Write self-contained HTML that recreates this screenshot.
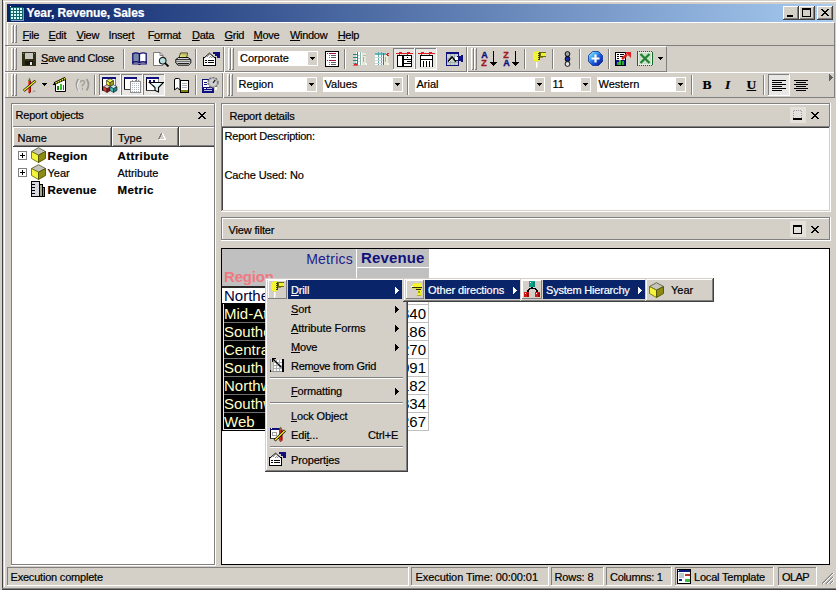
<!DOCTYPE html>
<html><head><meta charset="utf-8"><title>Year, Revenue, Sales</title>
<style>
html,body{margin:0;padding:0}
body{width:836px;height:590px;background:#d4d0c8;position:relative;overflow:hidden;font-family:"Liberation Sans",sans-serif;font-size:11px;color:#000}
#w{position:absolute;left:0;top:0;width:836px;height:590px;overflow:hidden}
#w div,#w svg{position:absolute}
.t{white-space:nowrap;line-height:13px;font-size:11px;-webkit-text-stroke:0.2px}
.b{font-weight:bold}
.g{white-space:nowrap;font-size:14px;line-height:16px}
u{text-decoration:underline}
</style></head><body><div id="w">
<div style="left:2px;top:0px;width:1px;height:590px;background:#404040;"></div>
<div style="left:3px;top:1px;width:833px;height:1px;background:#ffffff;"></div>
<div style="left:4px;top:1px;width:1px;height:586px;background:#ffffff;"></div>
<div style="left:2px;top:588px;width:834px;height:1px;background:#808080;"></div>
<div style="left:2px;top:589px;width:834px;height:1px;background:#404040;"></div>
<div style="left:7px;top:4px;width:827px;height:18px;background:linear-gradient(to right,#0a246a 0%,#a6caf0 100%);"></div>
<div class="t b" style="left:26.5px;top:6px;color:#fff;font-size:12px;line-height:14px;letter-spacing:-0.08px">Year, Revenue, Sales</div>
<div style="left:783px;top:6px;width:16px;height:14px;background:#d4d0c8;"></div>
<div style="left:783px;top:6px;width:15px;height:1px;background:#ffffff;"></div>
<div style="left:783px;top:6px;width:1px;height:13px;background:#ffffff;"></div>
<div style="left:783px;top:19px;width:16px;height:1px;background:#404040;"></div>
<div style="left:798px;top:6px;width:1px;height:14px;background:#404040;"></div>
<div style="left:784px;top:18px;width:14px;height:1px;background:#808080;"></div>
<div style="left:797px;top:7px;width:1px;height:12px;background:#808080;"></div>
<div style="left:799px;top:6px;width:16px;height:14px;background:#d4d0c8;"></div>
<div style="left:799px;top:6px;width:15px;height:1px;background:#ffffff;"></div>
<div style="left:799px;top:6px;width:1px;height:13px;background:#ffffff;"></div>
<div style="left:799px;top:19px;width:16px;height:1px;background:#404040;"></div>
<div style="left:814px;top:6px;width:1px;height:14px;background:#404040;"></div>
<div style="left:800px;top:18px;width:14px;height:1px;background:#808080;"></div>
<div style="left:813px;top:7px;width:1px;height:12px;background:#808080;"></div>
<div style="left:817px;top:6px;width:16px;height:14px;background:#d4d0c8;"></div>
<div style="left:817px;top:6px;width:15px;height:1px;background:#ffffff;"></div>
<div style="left:817px;top:6px;width:1px;height:13px;background:#ffffff;"></div>
<div style="left:817px;top:19px;width:16px;height:1px;background:#404040;"></div>
<div style="left:832px;top:6px;width:1px;height:14px;background:#404040;"></div>
<div style="left:818px;top:18px;width:14px;height:1px;background:#808080;"></div>
<div style="left:831px;top:7px;width:1px;height:12px;background:#808080;"></div>
<div style="left:787px;top:15px;width:6px;height:2px;background:#000;"></div>
<div style="left:802px;top:8px;width:9px;height:9px;background:#000;"></div>
<div style="left:803px;top:10px;width:7px;height:6px;background:#d4d0c8;"></div>
<svg style="left:821px;top:9px" width="8" height="7" viewBox="0 0 8 7" shape-rendering="crispEdges"><path d="M0 0h2v1h1v1h2v-1h1v-1h2v1h-1v1h-1v1h-1v1h1v1h1v1h1v1h-2v-1h-1v-1h-2v1h-1v1h-2v-1h1v-1h1v-1h1v-1h-1v-1h-1v-1h-1z" fill="#000"/></svg>
<div style="left:7px;top:22px;width:827px;height:1px;background:#ffffff;"></div>
<div style="left:7px;top:22px;width:1px;height:76px;background:#ffffff;"></div>
<div style="left:5px;top:45px;width:830px;height:1px;background:#808080;"></div>
<div style="left:7px;top:46px;width:659px;height:1px;background:#ffffff;"></div>
<div style="left:5px;top:71px;width:662px;height:1px;background:#808080;"></div>
<div style="left:666px;top:47px;width:1px;height:25px;background:#808080;"></div>
<div style="left:5px;top:72px;width:830px;height:1px;background:#ffffff;"></div>
<div style="left:5px;top:97px;width:830px;height:1px;background:#808080;"></div>
<div style="left:834px;top:23px;width:1px;height:75px;background:#808080;"></div>
<div style="left:11px;top:25px;width:1px;height:18px;background:#ffffff;"></div>
<div style="left:11px;top:25px;width:2px;height:1px;background:#ffffff;"></div>
<div style="left:13px;top:25px;width:1px;height:18px;background:#808080;"></div>
<div style="left:12px;top:42px;width:2px;height:1px;background:#808080;"></div>
<div style="left:14px;top:25px;width:1px;height:18px;background:#ffffff;"></div>
<div style="left:14px;top:25px;width:2px;height:1px;background:#ffffff;"></div>
<div style="left:16px;top:25px;width:1px;height:18px;background:#808080;"></div>
<div style="left:15px;top:42px;width:2px;height:1px;background:#808080;"></div>
<div style="left:11px;top:48px;width:1px;height:22px;background:#ffffff;"></div>
<div style="left:11px;top:48px;width:2px;height:1px;background:#ffffff;"></div>
<div style="left:13px;top:48px;width:1px;height:22px;background:#808080;"></div>
<div style="left:12px;top:69px;width:2px;height:1px;background:#808080;"></div>
<div style="left:14px;top:48px;width:1px;height:22px;background:#ffffff;"></div>
<div style="left:14px;top:48px;width:2px;height:1px;background:#ffffff;"></div>
<div style="left:16px;top:48px;width:1px;height:22px;background:#808080;"></div>
<div style="left:15px;top:69px;width:2px;height:1px;background:#808080;"></div>
<div style="left:11px;top:74px;width:1px;height:22px;background:#ffffff;"></div>
<div style="left:11px;top:74px;width:2px;height:1px;background:#ffffff;"></div>
<div style="left:13px;top:74px;width:1px;height:22px;background:#808080;"></div>
<div style="left:12px;top:95px;width:2px;height:1px;background:#808080;"></div>
<div style="left:14px;top:74px;width:1px;height:22px;background:#ffffff;"></div>
<div style="left:14px;top:74px;width:2px;height:1px;background:#ffffff;"></div>
<div style="left:16px;top:74px;width:1px;height:22px;background:#808080;"></div>
<div style="left:15px;top:95px;width:2px;height:1px;background:#808080;"></div>
<div style="left:223px;top:47px;width:1px;height:25px;background:#808080;"></div>
<div style="left:224px;top:47px;width:1px;height:25px;background:#ffffff;"></div>
<div style="left:466px;top:47px;width:1px;height:25px;background:#808080;"></div>
<div style="left:467px;top:47px;width:1px;height:25px;background:#ffffff;"></div>
<div style="left:222px;top:73px;width:1px;height:25px;background:#808080;"></div>
<div style="left:223px;top:73px;width:1px;height:25px;background:#ffffff;"></div>
<div style="left:228px;top:48px;width:1px;height:22px;background:#ffffff;"></div>
<div style="left:228px;top:48px;width:2px;height:1px;background:#ffffff;"></div>
<div style="left:230px;top:48px;width:1px;height:22px;background:#808080;"></div>
<div style="left:229px;top:69px;width:2px;height:1px;background:#808080;"></div>
<div style="left:231px;top:48px;width:1px;height:22px;background:#ffffff;"></div>
<div style="left:231px;top:48px;width:2px;height:1px;background:#ffffff;"></div>
<div style="left:233px;top:48px;width:1px;height:22px;background:#808080;"></div>
<div style="left:232px;top:69px;width:2px;height:1px;background:#808080;"></div>
<div style="left:471px;top:48px;width:1px;height:22px;background:#ffffff;"></div>
<div style="left:471px;top:48px;width:2px;height:1px;background:#ffffff;"></div>
<div style="left:473px;top:48px;width:1px;height:22px;background:#808080;"></div>
<div style="left:472px;top:69px;width:2px;height:1px;background:#808080;"></div>
<div style="left:474px;top:48px;width:1px;height:22px;background:#ffffff;"></div>
<div style="left:474px;top:48px;width:2px;height:1px;background:#ffffff;"></div>
<div style="left:476px;top:48px;width:1px;height:22px;background:#808080;"></div>
<div style="left:475px;top:69px;width:2px;height:1px;background:#808080;"></div>
<div style="left:227px;top:74px;width:1px;height:22px;background:#ffffff;"></div>
<div style="left:227px;top:74px;width:2px;height:1px;background:#ffffff;"></div>
<div style="left:229px;top:74px;width:1px;height:22px;background:#808080;"></div>
<div style="left:228px;top:95px;width:2px;height:1px;background:#808080;"></div>
<div style="left:230px;top:74px;width:1px;height:22px;background:#ffffff;"></div>
<div style="left:230px;top:74px;width:2px;height:1px;background:#ffffff;"></div>
<div style="left:232px;top:74px;width:1px;height:22px;background:#808080;"></div>
<div style="left:231px;top:95px;width:2px;height:1px;background:#808080;"></div>
<div class="t" style="left:22.6px;top:29px;letter-spacing:-0.3px"><u>F</u>ile</div>
<div class="t" style="left:48.5px;top:29px;letter-spacing:-0.3px"><u>E</u>dit</div>
<div class="t" style="left:76.6px;top:29px;letter-spacing:-0.3px"><u>V</u>iew</div>
<div class="t" style="left:108.5px;top:29px;letter-spacing:-0.3px">Inse<u>r</u>t</div>
<div class="t" style="left:147.7px;top:29px;letter-spacing:-0.3px">F<u>o</u>rmat</div>
<div class="t" style="left:192px;top:29px;letter-spacing:-0.3px"><u>D</u>ata</div>
<div class="t" style="left:224.6px;top:29px;letter-spacing:-0.3px"><u>G</u>rid</div>
<div class="t" style="left:253.5px;top:29px;letter-spacing:-0.3px"><u>M</u>ove</div>
<div class="t" style="left:290px;top:29px;letter-spacing:-0.3px"><u>W</u>indow</div>
<div class="t" style="left:337.7px;top:29px;letter-spacing:-0.3px"><u>H</u>elp</div>
<div style="left:123px;top:49px;width:1px;height:20px;background:#808080;"></div>
<div style="left:124px;top:49px;width:1px;height:20px;background:#ffffff;"></div>
<div style="left:195px;top:49px;width:1px;height:20px;background:#808080;"></div>
<div style="left:196px;top:49px;width:1px;height:20px;background:#ffffff;"></div>
<div style="left:344px;top:49px;width:1px;height:20px;background:#808080;"></div>
<div style="left:345px;top:49px;width:1px;height:20px;background:#ffffff;"></div>
<div style="left:524px;top:49px;width:1px;height:20px;background:#808080;"></div>
<div style="left:525px;top:49px;width:1px;height:20px;background:#ffffff;"></div>
<div style="left:552px;top:49px;width:1px;height:20px;background:#808080;"></div>
<div style="left:553px;top:49px;width:1px;height:20px;background:#ffffff;"></div>
<div style="left:579px;top:49px;width:1px;height:20px;background:#808080;"></div>
<div style="left:580px;top:49px;width:1px;height:20px;background:#ffffff;"></div>
<div style="left:608px;top:49px;width:1px;height:20px;background:#808080;"></div>
<div style="left:609px;top:49px;width:1px;height:20px;background:#ffffff;"></div>
<div style="left:94px;top:75px;width:1px;height:20px;background:#808080;"></div>
<div style="left:95px;top:75px;width:1px;height:20px;background:#ffffff;"></div>
<div style="left:407px;top:75px;width:1px;height:20px;background:#808080;"></div>
<div style="left:408px;top:75px;width:1px;height:20px;background:#ffffff;"></div>
<div style="left:691px;top:75px;width:1px;height:20px;background:#808080;"></div>
<div style="left:692px;top:75px;width:1px;height:20px;background:#ffffff;"></div>
<div style="left:763px;top:75px;width:1px;height:20px;background:#808080;"></div>
<div style="left:764px;top:75px;width:1px;height:20px;background:#ffffff;"></div>
<div style="left:238px;top:51px;width:80px;height:15px;background:#fff;"></div>
<div class="t" style="left:240px;top:52px;">Corporate</div>
<div style="left:308px;top:52px;width:9px;height:13px;background:#d4d0c8;"></div>
<svg style="left:310px;top:57px" width="5" height="3" viewBox="0 0 5 3" shape-rendering="crispEdges"><path d="M0 0h5v1h-1v1h-1v1h-1v-1h-1v-1h-1z" fill="#000"/></svg>
<div style="left:237px;top:77px;width:80px;height:15px;background:#fff;"></div>
<div class="t" style="left:238.5px;top:78px;">Region</div>
<div style="left:307px;top:78px;width:9px;height:13px;background:#d4d0c8;"></div>
<svg style="left:309px;top:83px" width="5" height="3" viewBox="0 0 5 3" shape-rendering="crispEdges"><path d="M0 0h5v1h-1v1h-1v1h-1v-1h-1v-1h-1z" fill="#000"/></svg>
<div style="left:323px;top:77px;width:80px;height:15px;background:#fff;"></div>
<div class="t" style="left:324.5px;top:78px;">Values</div>
<div style="left:393px;top:78px;width:9px;height:13px;background:#d4d0c8;"></div>
<svg style="left:395px;top:83px" width="5" height="3" viewBox="0 0 5 3" shape-rendering="crispEdges"><path d="M0 0h5v1h-1v1h-1v1h-1v-1h-1v-1h-1z" fill="#000"/></svg>
<div style="left:415px;top:77px;width:130px;height:15px;background:#fff;"></div>
<div class="t" style="left:416.5px;top:78px;">Arial</div>
<div style="left:535px;top:78px;width:9px;height:13px;background:#d4d0c8;"></div>
<svg style="left:537px;top:83px" width="5" height="3" viewBox="0 0 5 3" shape-rendering="crispEdges"><path d="M0 0h5v1h-1v1h-1v1h-1v-1h-1v-1h-1z" fill="#000"/></svg>
<div style="left:551px;top:77px;width:40px;height:15px;background:#fff;"></div>
<div class="t" style="left:552.5px;top:78px;">11</div>
<div style="left:581px;top:78px;width:9px;height:13px;background:#d4d0c8;"></div>
<svg style="left:583px;top:83px" width="5" height="3" viewBox="0 0 5 3" shape-rendering="crispEdges"><path d="M0 0h5v1h-1v1h-1v1h-1v-1h-1v-1h-1z" fill="#000"/></svg>
<div style="left:597px;top:77px;width:89px;height:15px;background:#fff;"></div>
<div class="t" style="left:598.5px;top:78px;">Western</div>
<div style="left:676px;top:78px;width:9px;height:13px;background:#d4d0c8;"></div>
<svg style="left:678px;top:83px" width="5" height="3" viewBox="0 0 5 3" shape-rendering="crispEdges"><path d="M0 0h5v1h-1v1h-1v1h-1v-1h-1v-1h-1z" fill="#000"/></svg>
<div class="t" style="left:41px;top:52px;letter-spacing:-0.33px"><u>S</u>ave and Close</div>
<svg style="left:9px;top:5px" width="16" height="16" viewBox="0 0 16 16" shape-rendering="crispEdges"><rect x="0" y="0" width="16" height="16" fill="#0a246a"/><rect x="1" y="2" width="13" height="13" fill="#126868"/><rect x="2" y="3" width="2" height="2" fill="#d8ffff"/><rect x="2" y="6" width="2" height="2" fill="#d8ffff"/><rect x="2" y="9" width="2" height="2" fill="#d8ffff"/><rect x="2" y="12" width="2" height="2" fill="#d8ffff"/><rect x="5" y="3" width="2" height="2" fill="#d8ffff"/><rect x="5" y="6" width="2" height="2" fill="#d8ffff"/><rect x="5" y="9" width="2" height="2" fill="#d8ffff"/><rect x="5" y="12" width="2" height="2" fill="#d8ffff"/><rect x="8" y="3" width="2" height="2" fill="#d8ffff"/><rect x="8" y="6" width="2" height="2" fill="#d8ffff"/><rect x="8" y="9" width="2" height="2" fill="#d8ffff"/><rect x="8" y="12" width="2" height="2" fill="#d8ffff"/><rect x="11" y="3" width="2" height="2" fill="#d8ffff"/><rect x="11" y="6" width="2" height="2" fill="#d8ffff"/><rect x="11" y="9" width="2" height="2" fill="#d8ffff"/><rect x="11" y="12" width="2" height="2" fill="#d8ffff"/><rect x="2" y="15" width="13" height="1" fill="#8098c8"/><rect x="14" y="3" width="1" height="13" fill="#8098c8"/><rect x="1" y="1" width="1" height="1" fill="#fff"/></svg>
<svg style="left:22px;top:52px" width="14" height="14" viewBox="0 0 14 14" shape-rendering="crispEdges"><rect x="0" y="0" width="14" height="14" fill="#303018"/><rect x="3" y="1" width="8" height="6" fill="#c8c8c0"/><rect x="1" y="1" width="1" height="1" fill="#808060"/><rect x="12" y="1" width="1" height="1" fill="#808060"/><rect x="3" y="9" width="8" height="4" fill="#181808"/><rect x="8" y="10" width="2" height="3" fill="#e8e8e8"/></svg>
<svg style="left:132px;top:52px" width="15" height="13" viewBox="0 0 15 13" shape-rendering="crispEdges"><g shape-rendering="geometricPrecision"><path d="M0.8 1.5 Q4 0 7.5 1.8 L7.5 10.5 Q4 9 0.8 10.5 Z" fill="#7888a8" stroke="#101070" stroke-width="1.3" /><path d="M14.2 1.5 Q11 0 7.5 1.8 L7.5 10.5 Q11 9 14.2 10.5 Z" fill="#fff" stroke="#101070" stroke-width="1.3" /><path d="M0.8 10.5 L0.8 12 L6.5 12 L7.5 12.8 L8.5 12 L14.2 12 L14.2 10.5" fill="none" stroke="#101070" stroke-width="1.2" /></g></svg>
<svg style="left:153px;top:52px" width="17" height="15" viewBox="0 0 17 15" shape-rendering="crispEdges"><g shape-rendering="geometricPrecision"><path d="M0.5 0.5 H7 L10 3.5 V13.5 H0.5 Z" fill="#fff" stroke="#606060" stroke-width="0.8" /><path d="M7 0.5 V3.5 H10" fill="none" stroke="#606060" stroke-width="0.8" /><circle cx="9.7" cy="8.7" r="3.3" fill="#b8e0e0" stroke="#202020" stroke-width="1.1"/><path d="M12 11.2 L15.5 14.5" fill="none" stroke="#000" stroke-width="1.8" /></g></svg>
<svg style="left:175px;top:52px" width="17" height="14" viewBox="0 0 17 14" shape-rendering="crispEdges"><g shape-rendering="geometricPrecision"><path d="M4 6 L5.5 1 H12.5 L11.5 6 Z" fill="#f4f490" stroke="#303010" stroke-width="0.9" /><path d="M6.5 2.6 H11.3 M6.2 4 H11" fill="none" stroke="#a0a040" stroke-width="0.7" /><path d="M0.8 7.5 L3.5 5.5 H13 L15.8 7.5 V11 L13.5 13.2 H3 L0.8 11 Z" fill="#d0d0d0" stroke="#101010" stroke-width="1" /><path d="M0.8 7.5 H15.8" fill="none" stroke="#101010" stroke-width="0.8" /><path d="M1.2 9.4 H15.4" fill="none" stroke="#707070" stroke-width="1" /><path d="M2.5 11.5 H14" fill="none" stroke="#202020" stroke-width="1" /></g></svg>
<svg style="left:203px;top:52px" width="17" height="14" viewBox="0 0 17 14" shape-rendering="crispEdges"><rect x="0" y="5" width="13" height="9" fill="#000"/><rect x="1" y="6" width="11" height="7" fill="#fff"/><rect x="2" y="8" width="2" height="1" fill="#000"/><rect x="5" y="8" width="6" height="1" fill="#000"/><rect x="2" y="10" width="2" height="1" fill="#000"/><rect x="5" y="10" width="6" height="1" fill="#000"/><g shape-rendering="geometricPrecision"><path d="M1 6 L6.5 1.2 L12 6" fill="#fff" stroke="#000" stroke-width="1" /><path d="M4 5 L7 2.2 M6 6 L9 3.2 M8 6 L10 4.2" fill="none" stroke="#707070" stroke-width="0.8" /></g><rect x="10" y="0" width="7" height="2" fill="#10107c"/><rect x="14" y="0" width="3" height="6" fill="#10107c"/><rect x="12" y="2" width="2" height="2" fill="#10107c"/></svg>
<svg style="left:325px;top:51px" width="14" height="16" viewBox="0 0 14 16" shape-rendering="crispEdges"><rect x="0" y="0" width="14" height="16" fill="#000"/><rect x="1" y="1" width="12" height="14" fill="#fff"/><rect x="4" y="2" width="7" height="1" fill="#a01040"/><rect x="2" y="2" width="1" height="1" fill="#a01040"/><rect x="4" y="4" width="1" height="1" fill="#808080"/><rect x="6" y="4" width="5" height="1" fill="#606060"/><rect x="4" y="6" width="1" height="1" fill="#808080"/><rect x="6" y="6" width="5" height="1" fill="#606060"/><rect x="4" y="9" width="7" height="1" fill="#a01040"/><rect x="2" y="9" width="1" height="1" fill="#a01040"/><rect x="4" y="11" width="1" height="1" fill="#808080"/><rect x="6" y="11" width="5" height="1" fill="#606060"/><rect x="4" y="13" width="1" height="1" fill="#808080"/><rect x="6" y="13" width="5" height="1" fill="#606060"/></svg>
<svg style="left:353px;top:52px" width="14" height="14" viewBox="0 0 14 14" shape-rendering="crispEdges"><rect x="3" y="0" width="6" height="13" fill="#fff"/><rect x="0" y="2" width="5" height="1" fill="#208888"/><rect x="0" y="5" width="5" height="1" fill="#208888"/><rect x="0" y="8" width="5" height="1" fill="#208888"/><rect x="0" y="11" width="5" height="1" fill="#60a8a8"/><rect x="4" y="0" width="1" height="13" fill="#208888"/><rect x="7" y="0" width="1" height="13" fill="#88b8b0"/><rect x="5" y="3" width="2" height="1" fill="#d0d8d0"/><rect x="5" y="6" width="2" height="1" fill="#d0d8d0"/><rect x="5" y="9" width="2" height="1" fill="#d0d8d0"/><rect x="9" y="1" width="4" height="12" fill="#e4e8d8"/><rect x="10" y="3" width="3" height="1" fill="#b0c0a0"/><rect x="10" y="5" width="1" height="5" fill="#98b890"/><rect x="12" y="11" width="2" height="2" fill="#f4f4f0"/><rect x="1" y="12" width="3" height="1" fill="#e02020"/><rect x="2" y="11" width="1" height="1" fill="#e02020"/><rect x="0" y="13" width="5" height="1" fill="#e06060"/></svg>
<svg style="left:375px;top:52px" width="15" height="14" viewBox="0 0 15 14" shape-rendering="crispEdges"><rect x="0" y="1" width="11" height="2" fill="#58b8c0"/><rect x="0" y="3" width="11" height="10" fill="#fff"/><rect x="3" y="0" width="1" height="13" fill="#58a8a8"/><rect x="6" y="0" width="1" height="13" fill="#58a8a8"/><rect x="0" y="5" width="11" height="1" fill="#c8d8d8"/><rect x="0" y="8" width="11" height="1" fill="#c8d8d8"/><rect x="0" y="11" width="11" height="1" fill="#c8d8d8"/><rect x="8" y="1" width="1" height="12" fill="#308080"/><rect x="9" y="3" width="4" height="10" fill="#e8ecd8"/><rect x="10" y="5" width="1" height="5" fill="#98b890"/><rect x="12" y="11" width="2" height="2" fill="#f4f4f0"/><rect x="12" y="1" width="2" height="1" fill="#e02020"/><rect x="11" y="2" width="2" height="1" fill="#e02020"/><rect x="12" y="3" width="2" height="1" fill="#e02020"/></svg>
<div style="left:393px;top:48px;width:22px;height:22px;background:#e9e7e3;"></div>
<div style="left:393px;top:48px;width:21px;height:1px;background:#808080;"></div>
<div style="left:393px;top:48px;width:1px;height:21px;background:#808080;"></div>
<div style="left:393px;top:69px;width:22px;height:1px;background:#ffffff;"></div>
<div style="left:414px;top:48px;width:1px;height:22px;background:#ffffff;"></div>
<div style="left:415px;top:48px;width:22px;height:22px;background:#e9e7e3;"></div>
<div style="left:415px;top:48px;width:21px;height:1px;background:#808080;"></div>
<div style="left:415px;top:48px;width:1px;height:21px;background:#808080;"></div>
<div style="left:415px;top:69px;width:22px;height:1px;background:#ffffff;"></div>
<div style="left:436px;top:48px;width:1px;height:22px;background:#ffffff;"></div>
<svg style="left:396px;top:52px" width="17" height="15" viewBox="0 0 17 15" shape-rendering="crispEdges"><rect x="0" y="1" width="17" height="1" fill="#e02020"/><rect x="3" y="0" width="1" height="3" fill="#e02020"/><rect x="4" y="0" width="2" height="1" fill="#e02020"/><rect x="11" y="0" width="1" height="3" fill="#e02020"/><rect x="12" y="0" width="2" height="1" fill="#e02020"/><rect x="1" y="3" width="15" height="12" fill="#000"/><rect x="2" y="4" width="4" height="10" fill="#fff"/><rect x="8" y="4" width="7" height="1" fill="#fff"/><rect x="8" y="6" width="7" height="1" fill="#fff"/><rect x="8" y="8" width="7" height="1" fill="#fff"/><rect x="8" y="10" width="7" height="1" fill="#fff"/><rect x="8" y="12" width="7" height="2" fill="#fff"/><rect x="8" y="4" width="3" height="3" fill="#fff"/><rect x="8" y="8" width="3" height="2" fill="#fff"/><rect x="12" y="5" width="3" height="1" fill="#fff"/></svg>
<svg style="left:418px;top:52px" width="17" height="15" viewBox="0 0 17 15" shape-rendering="crispEdges"><rect x="0" y="1" width="17" height="1" fill="#e02020"/><rect x="3" y="0" width="1" height="3" fill="#e02020"/><rect x="4" y="0" width="2" height="1" fill="#e02020"/><rect x="11" y="0" width="1" height="3" fill="#e02020"/><rect x="12" y="0" width="2" height="1" fill="#e02020"/><rect x="2" y="3" width="13" height="12" fill="#000"/><rect x="3" y="4" width="11" height="3" fill="#fff"/><rect x="3" y="8" width="11" height="1" fill="#fff"/><rect x="3" y="9" width="2" height="5" fill="#fff"/><rect x="6" y="9" width="2" height="5" fill="#fff"/><rect x="9" y="9" width="2" height="5" fill="#fff"/><rect x="12" y="9" width="2" height="5" fill="#fff"/><rect x="2" y="14" width="13" height="1" fill="#e9e7e3"/><rect x="2" y="13" width="1" height="2" fill="#000"/><rect x="5" y="13" width="1" height="2" fill="#000"/><rect x="8" y="13" width="1" height="2" fill="#000"/><rect x="11" y="13" width="1" height="2" fill="#000"/><rect x="14" y="13" width="1" height="2" fill="#000"/></svg>
<svg style="left:446px;top:52px" width="17" height="14" viewBox="0 0 17 14" shape-rendering="crispEdges"><rect x="0" y="0" width="13" height="14" fill="#10107c"/><rect x="1" y="2" width="11" height="11" fill="#c8d0d0"/><rect x="1" y="0" width="11" height="2" fill="#10107c"/><rect x="4" y="2" width="1" height="11" fill="#a0b0b0"/><rect x="8" y="2" width="1" height="11" fill="#a0b0b0"/><rect x="1" y="6" width="11" height="1" fill="#a0b0b0"/><rect x="1" y="10" width="11" height="1" fill="#a0b0b0"/><g shape-rendering="geometricPrecision"><path d="M2 9.5 L6 5 L9.5 9 L11 7" fill="none" stroke="#000" stroke-width="1.6" /><path d="M3 10 L6.5 6.5" fill="none" stroke="#fff" stroke-width="0.8" /></g><rect x="11" y="4" width="6" height="5" fill="#10107c"/><rect x="9" y="5" width="3" height="3" fill="#fff"/><rect x="15" y="3" width="2" height="7" fill="#10107c"/></svg>
<svg style="left:481px;top:51px" width="17" height="16" viewBox="0 0 17 16" shape-rendering="crispEdges"><text x="0.3" y="6.9" font-family="Liberation Sans, sans-serif" font-weight="bold" font-size="9" fill="#10107c" stroke="#10107c" stroke-width="0.35" shape-rendering="geometricPrecision">A</text><text x="0.3" y="14.7" font-family="Liberation Sans, sans-serif" font-weight="bold" font-size="9" fill="#a01818" stroke="#a01818" stroke-width="0.35" shape-rendering="geometricPrecision">Z</text><rect x="12" y="0" width="1" height="14" fill="#000"/><rect x="9" y="11" width="7" height="1" fill="#000"/><rect x="10" y="12" width="5" height="1" fill="#000"/><rect x="11" y="13" width="3" height="1" fill="#000"/><rect x="12" y="14" width="1" height="1" fill="#000"/></svg>
<svg style="left:503px;top:51px" width="17" height="16" viewBox="0 0 17 16" shape-rendering="crispEdges"><text x="0.3" y="6.9" font-family="Liberation Sans, sans-serif" font-weight="bold" font-size="9" fill="#a01818" stroke="#a01818" stroke-width="0.35" shape-rendering="geometricPrecision">Z</text><text x="0.3" y="14.7" font-family="Liberation Sans, sans-serif" font-weight="bold" font-size="9" fill="#10107c" stroke="#10107c" stroke-width="0.35" shape-rendering="geometricPrecision">A</text><rect x="12" y="0" width="1" height="14" fill="#000"/><rect x="9" y="11" width="7" height="1" fill="#000"/><rect x="10" y="12" width="5" height="1" fill="#000"/><rect x="11" y="13" width="3" height="1" fill="#000"/><rect x="12" y="14" width="1" height="1" fill="#000"/></svg>
<svg style="left:533px;top:51px" width="13" height="17" viewBox="0 0 13 17" shape-rendering="crispEdges"><rect x="3" y="9" width="1" height="8" fill="#fff"/><rect x="4" y="10" width="1" height="6" fill="#e8e8e0"/><rect x="1" y="1" width="5" height="9" fill="#f4f430"/><rect x="0" y="2" width="1" height="6" fill="#f4f430"/><rect x="2" y="0" width="4" height="1" fill="#e8e840"/><rect x="2" y="10" width="3" height="1" fill="#e0e040"/><rect x="6" y="1" width="1" height="8" fill="#404010"/><rect x="5" y="2" width="1" height="1" fill="#404010"/><rect x="5" y="4" width="1" height="1" fill="#404010"/><rect x="5" y="6" width="1" height="1" fill="#404010"/><rect x="5" y="8" width="1" height="1" fill="#404010"/><rect x="7" y="1" width="6" height="5" fill="#686810"/><rect x="8" y="2" width="5" height="3" fill="#f0f030"/><rect x="7" y="6" width="3" height="1" fill="#909020"/></svg>
<svg style="left:563px;top:51px" width="9" height="16" viewBox="0 0 9 16" shape-rendering="crispEdges"><g shape-rendering="geometricPrecision"><rect x="2.6" y="2" width="3.8" height="12" fill="#303030"/><circle cx="4.5" cy="3" r="2.4" fill="#9aa4a4" stroke="#000" stroke-width="0.9"/><circle cx="4.5" cy="8" r="2.4" fill="#1828a8" stroke="#000" stroke-width="0.9"/><circle cx="4.5" cy="13" r="2.4" fill="#e4e4e4" stroke="#000" stroke-width="0.9"/></g></svg>
<svg style="left:588px;top:51px" width="15" height="15" viewBox="0 0 15 15" shape-rendering="crispEdges"><defs><linearGradient id="gg" x1="0" y1="0" x2="1" y2="1"><stop offset="0" stop-color="#b0f0ff"/><stop offset="0.3" stop-color="#48b0f0"/><stop offset="0.6" stop-color="#1850d8"/><stop offset="1" stop-color="#081078"/></linearGradient></defs><g shape-rendering="geometricPrecision"><path d="M4.5 0.5 H10.5 L14.5 4.5 V10.5 L10.5 14.5 H4.5 L0.5 10.5 V4.5 Z" fill="url(#gg)" stroke="#1030a0" stroke-width="0.8" /><path d="M7.5 3.5 V11.5 M3.5 7.5 H11.5" fill="none" stroke="#fff" stroke-width="2.2" /></g></svg>
<svg style="left:615px;top:52px" width="17" height="14" viewBox="0 0 17 14" shape-rendering="crispEdges"><rect x="0" y="0" width="11" height="14" fill="#000"/><rect x="1" y="1" width="9" height="12" fill="#fff"/><rect x="2" y="2" width="2" height="1" fill="#000"/><rect x="5" y="2" width="4" height="1" fill="#000"/><rect x="2" y="4" width="2" height="1" fill="#000"/><rect x="5" y="4" width="3" height="1" fill="#000"/><rect x="2" y="6" width="2" height="1" fill="#000"/><rect x="1" y="8" width="9" height="5" fill="#10107c"/><rect x="2" y="10" width="2" height="3" fill="#30a030"/><rect x="4" y="8" width="2" height="5" fill="#30c030"/><rect x="7" y="9" width="2" height="4" fill="#30a030"/><g shape-rendering="geometricPrecision"><path d="M7 7 L12 2.5" fill="none" stroke="#e02020" stroke-width="2.4" /><path d="M10 0 H16 V6 Z" fill="#e02020" /></g></svg>
<svg style="left:637px;top:51px" width="16" height="15" viewBox="0 0 16 15" shape-rendering="crispEdges"><rect x="0" y="0" width="16" height="15" fill="#186828"/><rect x="1" y="1" width="14" height="13" fill="#e4f0e4"/><rect x="2" y="2" width="12" height="11" fill="#c8e0c8"/><rect x="1" y="0" width="1" height="1" fill="#d4d0c8"/><rect x="3" y="0" width="1" height="1" fill="#d4d0c8"/><rect x="5" y="0" width="1" height="1" fill="#d4d0c8"/><rect x="7" y="0" width="1" height="1" fill="#d4d0c8"/><rect x="9" y="0" width="1" height="1" fill="#d4d0c8"/><rect x="11" y="0" width="1" height="1" fill="#d4d0c8"/><rect x="13" y="0" width="1" height="1" fill="#d4d0c8"/><rect x="15" y="0" width="1" height="1" fill="#d4d0c8"/><rect x="1" y="14" width="1" height="1" fill="#d4d0c8"/><rect x="3" y="14" width="1" height="1" fill="#d4d0c8"/><rect x="5" y="14" width="1" height="1" fill="#d4d0c8"/><rect x="7" y="14" width="1" height="1" fill="#d4d0c8"/><rect x="9" y="14" width="1" height="1" fill="#d4d0c8"/><rect x="11" y="14" width="1" height="1" fill="#d4d0c8"/><rect x="13" y="14" width="1" height="1" fill="#d4d0c8"/><rect x="15" y="14" width="1" height="1" fill="#d4d0c8"/><g shape-rendering="geometricPrecision"><path d="M3.5 3 L12.5 12 M12.5 3 L3.5 12" fill="none" stroke="#208030" stroke-width="2.2" /></g></svg>
<svg style="left:658px;top:57px" width="5" height="3" viewBox="0 0 5 3" shape-rendering="crispEdges"><path d="M0 0h5v1h-1v1h-1v1h-1v-1h-1v-1h-1z" fill="#000"/></svg>
<svg style="left:23px;top:77px" width="14" height="17" viewBox="0 0 14 17" shape-rendering="crispEdges"><g shape-rendering="geometricPrecision"><path d="M9 15.5 L13 14.5 L11 13 Z" fill="#a0a0a0" /><path d="M5 4 L6.5 0.5 L8 4 Z" fill="#607030" /><rect x="5" y="4" width="3" height="11" fill="#d02818"/><rect x="5" y="4" width="1" height="11" fill="#f06050"/><rect x="7" y="4" width="1" height="11" fill="#901008"/><path d="M5 15 L6.5 16.5 L8 15 Z" fill="#901008" /><path d="M0.8 13.8 L12.5 3.8" fill="none" stroke="#000" stroke-width="2.6" /><path d="M1 13.6 L12.3 4" fill="none" stroke="#f8f020" stroke-width="1.3" /></g></svg>
<svg style="left:42px;top:83px" width="5" height="3" viewBox="0 0 5 3" shape-rendering="crispEdges"><path d="M0 0h5v1h-1v1h-1v1h-1v-1h-1v-1h-1z" fill="#000"/></svg>
<svg style="left:52px;top:77px" width="15" height="15" viewBox="0 0 15 15" shape-rendering="crispEdges"><g shape-rendering="geometricPrecision"><path d="M3.5 6 L13.5 2.5 V14.5 H3.5 Z" fill="#fff" stroke="#000" stroke-width="1" /><rect x="5" y="9" width="2" height="4" fill="#208020"/><rect x="8" y="7" width="2" height="6" fill="#30c030"/><rect x="11" y="8" width="1" height="5" fill="#208020"/><path d="M0.5 8 L3 5 L3.5 8 Z" fill="#000" /><path d="M2.5 6.5 L13.5 1.2" fill="none" stroke="#000" stroke-width="2.8" /><path d="M3.5 6 L13 1.5" fill="none" stroke="#f0f030" stroke-width="1.4" stroke-dasharray="1.5 0.8"/></g></svg>
<svg style="left:74px;top:78px" width="17" height="14" viewBox="0 0 17 14" shape-rendering="crispEdges"><g shape-rendering="geometricPrecision"><path d="M4.5 1 Q0.5 6.5 4.5 12.5" fill="none" stroke="#9c9c98" stroke-width="1.8" /><path d="M12.5 1 Q16.5 6.5 12.5 12.5" fill="none" stroke="#9c9c98" stroke-width="1.8" /><path d="M6.5 4.5 Q6.5 2.5 8.5 2.5 Q10.5 2.5 10.5 4.5 Q10.5 6 8.5 7 V8.5" fill="none" stroke="#a0a09c" stroke-width="1.4" /><rect x="8" y="10" width="1" height="2" fill="#a0a09c"/><path d="M5.5 2 Q1.5 7.5 5.5 13.5" fill="none" stroke="#fff" stroke-width="0.8" /></g></svg>
<div style="left:99px;top:74px;width:22px;height:22px;background:#e9e7e3;"></div>
<div style="left:99px;top:74px;width:21px;height:1px;background:#808080;"></div>
<div style="left:99px;top:74px;width:1px;height:21px;background:#808080;"></div>
<div style="left:99px;top:95px;width:22px;height:1px;background:#ffffff;"></div>
<div style="left:120px;top:74px;width:1px;height:22px;background:#ffffff;"></div>
<div style="left:121px;top:74px;width:22px;height:22px;background:#e9e7e3;"></div>
<div style="left:121px;top:74px;width:21px;height:1px;background:#808080;"></div>
<div style="left:121px;top:74px;width:1px;height:21px;background:#808080;"></div>
<div style="left:121px;top:95px;width:22px;height:1px;background:#ffffff;"></div>
<div style="left:142px;top:74px;width:1px;height:22px;background:#ffffff;"></div>
<div style="left:143px;top:74px;width:22px;height:22px;background:#e9e7e3;"></div>
<div style="left:143px;top:74px;width:21px;height:1px;background:#808080;"></div>
<div style="left:143px;top:74px;width:1px;height:21px;background:#808080;"></div>
<div style="left:143px;top:95px;width:22px;height:1px;background:#ffffff;"></div>
<div style="left:164px;top:74px;width:1px;height:22px;background:#ffffff;"></div>
<svg style="left:102px;top:77px" width="16" height="16" viewBox="0 0 16 16" shape-rendering="crispEdges"><rect x="0" y="0" width="14" height="2" fill="#10107c"/><rect x="0" y="2" width="1" height="12" fill="#000"/><rect x="1" y="2" width="13" height="11" fill="#fff"/><rect x="13" y="2" width="1" height="11" fill="#808080"/><rect x="0" y="13" width="14" height="1" fill="#404040"/><g shape-rendering="geometricPrecision"><path d="M4.5 3.7 L8 1.7000000000000002 L11.5 3.7 L8 5.7 Z" fill="#f8f860" stroke="#202020" stroke-width="0.6" /><path d="M4.5 3.7 L8 5.7 V9.5 L4.5 7.5 Z" fill="#f0f020" stroke="#202020" stroke-width="0.6" /><path d="M11.5 3.7 L8 5.7 V9.5 L11.5 7.5 Z" fill="#a0a010" stroke="#202020" stroke-width="0.6" /><path d="M1.5 9.7 L5 7.7 L8.5 9.7 L5 11.7 Z" fill="#f0c0c0" stroke="#202020" stroke-width="0.6" /><path d="M1.5 9.7 L5 11.7 V15.5 L1.5 13.5 Z" fill="#e03030" stroke="#202020" stroke-width="0.6" /><path d="M8.5 9.7 L5 11.7 V15.5 L8.5 13.5 Z" fill="#901010" stroke="#202020" stroke-width="0.6" /><path d="M8.0 9.7 L11.5 7.7 L15.0 9.7 L11.5 11.7 Z" fill="#c0f0f0" stroke="#202020" stroke-width="0.6" /><path d="M8.0 9.7 L11.5 11.7 V15.5 L8.0 13.5 Z" fill="#40c0c0" stroke="#202020" stroke-width="0.6" /><path d="M15.0 9.7 L11.5 11.7 V15.5 L15.0 13.5 Z" fill="#208080" stroke="#202020" stroke-width="0.6" /></g></svg>
<svg style="left:124px;top:77px" width="17" height="16" viewBox="0 0 17 16" shape-rendering="crispEdges"><rect x="0" y="0" width="13" height="2" fill="#10107c"/><rect x="0" y="2" width="1" height="11" fill="#000"/><rect x="1" y="2" width="12" height="10" fill="#fff"/><rect x="12" y="2" width="1" height="10" fill="#808080"/><rect x="0" y="12" width="13" height="1" fill="#404040"/><rect x="6" y="4" width="11" height="12" fill="#909090"/><rect x="7" y="5" width="9" height="10" fill="#fff"/><rect x="8" y="6" width="1" height="1" fill="#b0b8c0"/><rect x="8" y="8" width="1" height="1" fill="#b0b8c0"/><rect x="8" y="10" width="1" height="1" fill="#b0b8c0"/><rect x="8" y="12" width="1" height="1" fill="#b0b8c0"/><rect x="8" y="14" width="1" height="1" fill="#b0b8c0"/><rect x="10" y="6" width="1" height="1" fill="#b0b8c0"/><rect x="10" y="8" width="1" height="1" fill="#b0b8c0"/><rect x="10" y="10" width="1" height="1" fill="#b0b8c0"/><rect x="10" y="12" width="1" height="1" fill="#b0b8c0"/><rect x="10" y="14" width="1" height="1" fill="#b0b8c0"/><rect x="12" y="6" width="1" height="1" fill="#b0b8c0"/><rect x="12" y="8" width="1" height="1" fill="#b0b8c0"/><rect x="12" y="10" width="1" height="1" fill="#b0b8c0"/><rect x="12" y="12" width="1" height="1" fill="#b0b8c0"/><rect x="12" y="14" width="1" height="1" fill="#b0b8c0"/><rect x="14" y="6" width="1" height="1" fill="#b0b8c0"/><rect x="14" y="8" width="1" height="1" fill="#b0b8c0"/><rect x="14" y="10" width="1" height="1" fill="#b0b8c0"/><rect x="14" y="12" width="1" height="1" fill="#b0b8c0"/><rect x="14" y="14" width="1" height="1" fill="#b0b8c0"/><rect x="8" y="3" width="1" height="2" fill="#909090"/><rect x="11" y="3" width="1" height="2" fill="#909090"/><rect x="14" y="3" width="1" height="2" fill="#909090"/></svg>
<svg style="left:146px;top:77px" width="18" height="16" viewBox="0 0 18 16" shape-rendering="crispEdges"><rect x="0" y="0" width="13" height="2" fill="#10107c"/><rect x="0" y="2" width="1" height="12" fill="#000"/><rect x="1" y="2" width="12" height="11" fill="#fff"/><rect x="12" y="2" width="1" height="11" fill="#808080"/><rect x="0" y="13" width="13" height="1" fill="#404040"/><rect x="3" y="3" width="2" height="2" fill="#10107c"/><rect x="7" y="3" width="2" height="2" fill="#10107c"/><g shape-rendering="geometricPrecision"><path d="M3.5 5.5 H17.5 L12.5 10.5 V15 L9 13.5 V10.5 Z" fill="#d8f4f4" stroke="#000" stroke-width="1.1" /><path d="M5.5 6.8 H14" fill="none" stroke="#fff" stroke-width="1" /></g></svg>
<div style="left:195px;top:75px;width:1px;height:20px;background:#808080;"></div>
<div style="left:196px;top:75px;width:1px;height:20px;background:#ffffff;"></div>
<svg style="left:174px;top:78px" width="15" height="15" viewBox="0 0 15 15" shape-rendering="crispEdges"><g shape-rendering="geometricPrecision"><path d="M0.5 2 Q0.5 0.5 2 0.5 H4.5 Q6 0.5 6 2 V12 L3.2 9.8 L0.5 12 Z" fill="#fff" stroke="#000" stroke-width="1" /></g><rect x="6" y="2" width="9" height="13" fill="#000"/><rect x="7" y="3" width="7" height="9" fill="#fff"/><rect x="7" y="12" width="7" height="2" fill="#808010"/><rect x="8" y="5" width="5" height="1" fill="#b0b0b0"/><rect x="8" y="7" width="5" height="1" fill="#b0b0b0"/><rect x="8" y="9" width="5" height="1" fill="#b0b0c8"/></svg>
<svg style="left:202px;top:77px" width="17" height="16" viewBox="0 0 17 16" shape-rendering="crispEdges"><rect x="0" y="2" width="12" height="14" fill="#10107c"/><rect x="1" y="3" width="10" height="12" fill="#fff"/><rect x="2" y="5" width="3" height="1" fill="#10107c"/><rect x="2" y="7" width="3" height="1" fill="#10107c"/><rect x="1" y="10" width="10" height="5" fill="#10107c"/><rect x="2" y="11" width="2" height="1" fill="#fff"/><rect x="5" y="11" width="5" height="1" fill="#c0c0e0"/><rect x="2" y="13" width="8" height="1" fill="#c0c0e0"/><g shape-rendering="geometricPrecision"><circle cx="11" cy="5.5" r="5" fill="#b8b8b8" stroke="#707070" stroke-width="1.4" stroke-dasharray="2 1.2"/><circle cx="11" cy="5.5" r="3.4" fill="#d0d0d0"/><path d="M11 5.8 L13.3 3" fill="none" stroke="#202020" stroke-width="1.2" /></g><rect x="13" y="10" width="2" height="3" fill="#fff"/></svg>
<div class="t b" style="left:702.5px;top:77px;font-family:'Liberation Serif',serif;font-size:13.5px;line-height:16px">B</div>
<div class="t b" style="left:725px;top:77px;font-family:'Liberation Serif',serif;font-size:13.5px;line-height:16px;font-style:italic">I</div>
<div class="t b" style="left:746.5px;top:77px;font-family:'Liberation Serif',serif;font-size:13.5px;line-height:16px"><u>U</u></div>
<div style="left:768px;top:74px;width:22px;height:22px;background:#e9e7e3;"></div>
<div style="left:768px;top:74px;width:21px;height:1px;background:#808080;"></div>
<div style="left:768px;top:74px;width:1px;height:21px;background:#808080;"></div>
<div style="left:768px;top:95px;width:22px;height:1px;background:#ffffff;"></div>
<div style="left:789px;top:74px;width:1px;height:22px;background:#ffffff;"></div>
<div style="left:772px;top:80px;width:14px;height:1px;background:#000;"></div>
<div style="left:772px;top:82px;width:10px;height:1px;background:#000;"></div>
<div style="left:772px;top:84px;width:14px;height:1px;background:#000;"></div>
<div style="left:772px;top:86px;width:10px;height:1px;background:#000;"></div>
<div style="left:772px;top:88px;width:14px;height:1px;background:#000;"></div>
<div style="left:772px;top:90px;width:10px;height:1px;background:#000;"></div>
<div style="left:794px;top:80px;width:14px;height:1px;background:#000;"></div>
<div style="left:796px;top:82px;width:10px;height:1px;background:#000;"></div>
<div style="left:794px;top:84px;width:14px;height:1px;background:#000;"></div>
<div style="left:796px;top:86px;width:10px;height:1px;background:#000;"></div>
<div style="left:794px;top:88px;width:14px;height:1px;background:#000;"></div>
<div style="left:796px;top:90px;width:10px;height:1px;background:#000;"></div>
<svg style="left:829px;top:74px" width="4" height="7" viewBox="0 0 4 7" shape-rendering="crispEdges"><path d="M0 0h1v1h1v1h1v1h1v1h-1v1h-1v1h-1v1h-1z" fill="#606060"/></svg>
<div style="left:11px;top:103px;width:204px;height:1px;background:#808080;"></div>
<div style="left:11px;top:103px;width:1px;height:462px;background:#808080;"></div>
<div style="left:12px;top:104px;width:202px;height:1px;background:#ffffff;"></div>
<div style="left:12px;top:104px;width:1px;height:460px;background:#ffffff;"></div>
<div style="left:12px;top:564px;width:203px;height:1px;background:#808080;"></div>
<div style="left:214px;top:104px;width:1px;height:461px;background:#808080;"></div>
<div style="left:11px;top:565px;width:205px;height:1px;background:#ffffff;"></div>
<div style="left:215px;top:103px;width:1px;height:463px;background:#ffffff;"></div>
<div class="t" style="left:15.5px;top:109px;letter-spacing:-0.2px">Report objects</div>
<svg style="left:198px;top:112px" width="8" height="7" viewBox="0 0 8 7" shape-rendering="crispEdges"><path d="M0 0h2v1h1v1h2v-1h1v-1h2v1h-1v1h-1v1h-1v1h1v1h1v1h1v1h-2v-1h-1v-1h-2v1h-1v1h-2v-1h1v-1h1v-1h1v-1h-1v-1h-1v-1h-1z" fill="#000"/></svg>
<div style="left:13px;top:126px;width:201px;height:1px;background:#808080;"></div>
<div style="left:13px;top:127px;width:99px;height:20px;background:#d4d0c8;"></div>
<div style="left:13px;top:127px;width:99px;height:1px;background:#ffffff;"></div>
<div style="left:13px;top:127px;width:1px;height:20px;background:#ffffff;"></div>
<div style="left:13px;top:146px;width:99px;height:1px;background:#404040;"></div>
<div style="left:111px;top:127px;width:1px;height:20px;background:#404040;"></div>
<div style="left:14px;top:145px;width:97px;height:1px;background:#808080;"></div>
<div style="left:110px;top:128px;width:1px;height:18px;background:#808080;"></div>
<div style="left:112px;top:127px;width:67px;height:20px;background:#d4d0c8;"></div>
<div style="left:112px;top:127px;width:67px;height:1px;background:#ffffff;"></div>
<div style="left:112px;top:127px;width:1px;height:20px;background:#ffffff;"></div>
<div style="left:112px;top:146px;width:67px;height:1px;background:#404040;"></div>
<div style="left:178px;top:127px;width:1px;height:20px;background:#404040;"></div>
<div style="left:113px;top:145px;width:65px;height:1px;background:#808080;"></div>
<div style="left:177px;top:128px;width:1px;height:18px;background:#808080;"></div>
<div style="left:179px;top:127px;width:35px;height:20px;background:#d4d0c8;"></div>
<div style="left:179px;top:127px;width:35px;height:1px;background:#ffffff;"></div>
<div style="left:179px;top:127px;width:1px;height:20px;background:#ffffff;"></div>
<div style="left:179px;top:146px;width:35px;height:1px;background:#404040;"></div>
<div style="left:180px;top:145px;width:34px;height:1px;background:#808080;"></div>
<div class="t" style="left:17.5px;top:132px;">Name</div>
<div class="t" style="left:118px;top:132px;">Type</div>
<svg style="left:158px;top:133px" width="8" height="7" viewBox="0 0 8 7" shape-rendering="crispEdges"><path d="M4 0 L0 7 H8 Z" fill="#d4d0c8"/><path d="M3.5 0.5 L0.5 6.5" stroke="#808080" fill="none"/><path d="M4.5 0.5 L7.5 6.5 H0.5" stroke="#fff" fill="none"/></svg>
<div style="left:13px;top:147px;width:201px;height:417px;background:#fff;"></div>
<div class="t b" style="left:47.5px;top:150px;font-size:11.5px;letter-spacing:0.15px">Region</div>
<div class="t b" style="left:117.5px;top:150px;font-size:11.5px;letter-spacing:0.4px">Attribute</div>
<svg style="left:18px;top:151px" width="9" height="9" viewBox="0 0 9 9" shape-rendering="crispEdges"><rect x="0.5" y="0.5" width="8" height="8" fill="#fff" stroke="#808080"/><rect x="2" y="4" width="5" height="1" fill="#000"/><rect x="4" y="2" width="1" height="5" fill="#000"/></svg>
<svg style="left:31px;top:147px" width="15" height="16" viewBox="0 0 15 16" shape-rendering="crispEdges"><g shape-rendering="geometricPrecision"><path d="M0.5 4.5 L7.5 0.7 L14.5 4.5 L7.5 8.2 Z" fill="#c4c4bc" stroke="#606040" stroke-width="0.9" /><path d="M0.5 4.5 L7.5 8.2 L7.5 15.5 L0.5 11.5 Z" fill="#f4f43c" stroke="#707000" stroke-width="0.9" /><path d="M14.5 4.5 L7.5 8.2 L7.5 15.5 L14.5 11.5 Z" fill="#8c8c14" stroke="#505000" stroke-width="0.9" /></g></svg>
<div class="t" style="left:47.5px;top:167px;">Year</div>
<div class="t" style="left:117.5px;top:167px;">Attribute</div>
<svg style="left:18px;top:168px" width="9" height="9" viewBox="0 0 9 9" shape-rendering="crispEdges"><rect x="0.5" y="0.5" width="8" height="8" fill="#fff" stroke="#808080"/><rect x="2" y="4" width="5" height="1" fill="#000"/><rect x="4" y="2" width="1" height="5" fill="#000"/></svg>
<svg style="left:31px;top:164px" width="15" height="16" viewBox="0 0 15 16" shape-rendering="crispEdges"><g shape-rendering="geometricPrecision"><path d="M0.5 4.5 L7.5 0.7 L14.5 4.5 L7.5 8.2 Z" fill="#c4c4bc" stroke="#606040" stroke-width="0.9" /><path d="M0.5 4.5 L7.5 8.2 L7.5 15.5 L0.5 11.5 Z" fill="#f4f43c" stroke="#707000" stroke-width="0.9" /><path d="M14.5 4.5 L7.5 8.2 L7.5 15.5 L14.5 11.5 Z" fill="#8c8c14" stroke="#505000" stroke-width="0.9" /></g></svg>
<div class="t b" style="left:47.5px;top:184px;font-size:11.5px;letter-spacing:0.15px">Revenue</div>
<div class="t b" style="left:117.5px;top:184px;font-size:11.5px;letter-spacing:0.4px">Metric</div>
<svg style="left:31px;top:181px" width="14" height="16" viewBox="0 0 14 16" shape-rendering="crispEdges"><rect x="0" y="0" width="9" height="16" fill="#000"/><rect x="1" y="1" width="7" height="14" fill="#d8d8e4"/><rect x="1" y="3" width="3" height="1" fill="#000"/><rect x="1" y="6" width="3" height="1" fill="#000"/><rect x="1" y="9" width="3" height="1" fill="#000"/><rect x="1" y="12" width="3" height="1" fill="#000"/><rect x="8" y="3" width="4" height="13" fill="#000"/><rect x="9" y="4" width="2" height="11" fill="#a8a888"/><rect x="11" y="6" width="3" height="10" fill="#000"/><rect x="12" y="7" width="1" height="8" fill="#888868"/></svg>
<div style="left:221px;top:103px;width:609px;height:1px;background:#808080;"></div>
<div style="left:221px;top:103px;width:1px;height:25px;background:#808080;"></div>
<div style="left:222px;top:104px;width:607px;height:1px;background:#ffffff;"></div>
<div style="left:222px;top:104px;width:1px;height:23px;background:#ffffff;"></div>
<div style="left:222px;top:127px;width:608px;height:1px;background:#808080;"></div>
<div style="left:829px;top:104px;width:1px;height:24px;background:#808080;"></div>
<div style="left:221px;top:128px;width:610px;height:1px;background:#ffffff;"></div>
<div style="left:830px;top:103px;width:1px;height:26px;background:#ffffff;"></div>
<div class="t" style="left:229.5px;top:110px;letter-spacing:-0.2px">Report details</div>
<div style="left:221px;top:126px;width:610px;height:86px;background:#fff;"></div>
<div style="left:221px;top:126px;width:610px;height:1px;background:#808080;"></div>
<div style="left:221px;top:126px;width:1px;height:86px;background:#808080;"></div>
<div style="left:222px;top:127px;width:608px;height:1px;background:#404040;"></div>
<div style="left:222px;top:127px;width:1px;height:84px;background:#404040;"></div>
<div style="left:222px;top:210px;width:608px;height:1px;background:#d4d0c8;"></div>
<div style="left:829px;top:127px;width:1px;height:84px;background:#d4d0c8;"></div>
<div style="left:221px;top:211px;width:610px;height:1px;background:#ffffff;"></div>
<div style="left:830px;top:126px;width:1px;height:86px;background:#ffffff;"></div>
<div class="t" style="left:224.5px;top:130px;letter-spacing:-0.2px">Report Description:</div>
<div class="t" style="left:224.5px;top:169px;letter-spacing:-0.1px">Cache Used: No</div>
<div style="left:790px;top:107px;width:16px;height:16px;background:#e4e1dc;"></div>
<div style="left:793px;top:118px;width:9px;height:2px;background:#000;"></div>
<svg style="left:793px;top:110px" width="9" height="8" viewBox="0 0 9 8" shape-rendering="crispEdges"><path d="M0.5 0.5h8M0.5 0.5v7M8.5 0.5v7" stroke="#9a9a9a" stroke-dasharray="1 1" fill="none"/></svg>
<svg style="left:811px;top:112px" width="8" height="7" viewBox="0 0 8 7" shape-rendering="crispEdges"><path d="M0 0h2v1h1v1h2v-1h1v-1h2v1h-1v1h-1v1h-1v1h1v1h1v1h1v1h-2v-1h-1v-1h-2v1h-1v1h-2v-1h1v-1h1v-1h1v-1h-1v-1h-1v-1h-1z" fill="#000"/></svg>
<div style="left:221px;top:217px;width:609px;height:1px;background:#808080;"></div>
<div style="left:221px;top:217px;width:1px;height:23px;background:#808080;"></div>
<div style="left:222px;top:218px;width:607px;height:1px;background:#ffffff;"></div>
<div style="left:222px;top:218px;width:1px;height:21px;background:#ffffff;"></div>
<div style="left:222px;top:239px;width:608px;height:1px;background:#808080;"></div>
<div style="left:829px;top:218px;width:1px;height:22px;background:#808080;"></div>
<div style="left:221px;top:240px;width:610px;height:1px;background:#ffffff;"></div>
<div style="left:830px;top:217px;width:1px;height:24px;background:#ffffff;"></div>
<div class="t" style="left:228.5px;top:224px;letter-spacing:-0.15px">View filter</div>
<div style="left:790px;top:221px;width:16px;height:16px;background:#e4e1dc;"></div>
<div style="left:793px;top:225px;width:9px;height:9px;background:#000;"></div>
<div style="left:794px;top:227px;width:7px;height:6px;background:#e4e1dc;"></div>
<svg style="left:811px;top:226px" width="8" height="7" viewBox="0 0 8 7" shape-rendering="crispEdges"><path d="M0 0h2v1h1v1h2v-1h1v-1h2v1h-1v1h-1v1h-1v1h1v1h1v1h1v1h-2v-1h-1v-1h-2v1h-1v1h-2v-1h1v-1h1v-1h1v-1h-1v-1h-1v-1h-1z" fill="#000"/></svg>
<div style="left:221px;top:248px;width:609px;height:317px;background:#fff;border:1px solid #000;box-sizing:border-box"></div>
<div style="left:222px;top:249px;width:134px;height:38px;background:#c0c0c0;"></div>
<div style="left:357px;top:249px;width:72px;height:18px;background:#c0c0c0;"></div>
<div style="left:357px;top:268px;width:72px;height:19px;background:#c0c0c0;"></div>
<div class="g" style="left:222px;top:251px;color:#1c1c8c;width:131px;text-align:right;letter-spacing:0.25px">Metrics</div>
<div class="g b" style="left:361px;top:250px;color:#10107c;font-size:15px;letter-spacing:0.15px">Revenue</div>
<div class="g b" style="left:224px;top:269px;color:#f07880;font-size:15px;letter-spacing:-0.2px">Region</div>
<div style="left:357px;top:286px;width:72px;height:1px;background:#c0c0c0;"></div>
<div style="left:222px;top:286px;width:134px;height:2px;background:#282828;"></div>
<div style="left:223px;top:288px;width:133px;height:15px;background:#fff;"></div>
<div style="left:222px;top:303px;width:134px;height:128px;background:#000;"></div>
<div style="left:223px;top:304px;width:1px;height:126px;background:#e8e8e8;"></div>
<div style="left:223px;top:429px;width:133px;height:1px;background:#e8e8e8;"></div>
<div class="g" style="left:224px;top:288px;font-size:15px;line-height:16px;color:#000040">Northeast</div>
<div style="left:357px;top:304px;width:72px;height:1px;background:#c0c0c0;"></div>
<div style="left:428px;top:287px;width:1px;height:18px;background:#c0c0c0;"></div>
<div class="g" style="left:326px;top:288px;font-size:15px;line-height:16px;width:100px;text-align:right">$8,554,415</div>
<div class="g" style="left:224px;top:306px;font-size:15px;line-height:16px;color:#ffffc8">Mid-Atlantic</div>
<div style="left:357px;top:322px;width:72px;height:1px;background:#c0c0c0;"></div>
<div style="left:428px;top:305px;width:1px;height:18px;background:#c0c0c0;"></div>
<div class="g" style="left:326px;top:306px;font-size:15px;line-height:16px;width:100px;text-align:right">$4,452,340</div>
<div style="left:224px;top:322px;width:132px;height:1px;background:#707070;"></div>
<div class="g" style="left:224px;top:324px;font-size:15px;line-height:16px;color:#ffffc8">Southeast</div>
<div style="left:357px;top:340px;width:72px;height:1px;background:#c0c0c0;"></div>
<div style="left:428px;top:323px;width:1px;height:18px;background:#c0c0c0;"></div>
<div class="g" style="left:326px;top:324px;font-size:15px;line-height:16px;width:100px;text-align:right">$2,239,186</div>
<div style="left:224px;top:340px;width:132px;height:1px;background:#707070;"></div>
<div class="g" style="left:224px;top:342px;font-size:15px;line-height:16px;color:#ffffc8">Central</div>
<div style="left:357px;top:358px;width:72px;height:1px;background:#c0c0c0;"></div>
<div style="left:428px;top:341px;width:1px;height:18px;background:#c0c0c0;"></div>
<div class="g" style="left:326px;top:342px;font-size:15px;line-height:16px;width:100px;text-align:right">$5,029,270</div>
<div style="left:224px;top:358px;width:132px;height:1px;background:#707070;"></div>
<div class="g" style="left:224px;top:360px;font-size:15px;line-height:16px;color:#ffffc8">South</div>
<div style="left:357px;top:376px;width:72px;height:1px;background:#c0c0c0;"></div>
<div style="left:428px;top:359px;width:1px;height:18px;background:#c0c0c0;"></div>
<div class="g" style="left:326px;top:360px;font-size:15px;line-height:16px;width:100px;text-align:right">$5,389,091</div>
<div style="left:224px;top:376px;width:132px;height:1px;background:#707070;"></div>
<div class="g" style="left:224px;top:378px;font-size:15px;line-height:16px;color:#ffffc8">Northwest</div>
<div style="left:357px;top:394px;width:72px;height:1px;background:#c0c0c0;"></div>
<div style="left:428px;top:377px;width:1px;height:18px;background:#c0c0c0;"></div>
<div class="g" style="left:326px;top:378px;font-size:15px;line-height:16px;width:100px;text-align:right">$1,761,182</div>
<div style="left:224px;top:394px;width:132px;height:1px;background:#707070;"></div>
<div class="g" style="left:224px;top:396px;font-size:15px;line-height:16px;color:#ffffc8">Southwest</div>
<div style="left:357px;top:412px;width:72px;height:1px;background:#c0c0c0;"></div>
<div style="left:428px;top:395px;width:1px;height:18px;background:#c0c0c0;"></div>
<div class="g" style="left:326px;top:396px;font-size:15px;line-height:16px;width:100px;text-align:right">$3,694,334</div>
<div style="left:224px;top:412px;width:132px;height:1px;background:#707070;"></div>
<div class="g" style="left:224px;top:414px;font-size:15px;line-height:16px;color:#ffffc8">Web</div>
<div style="left:357px;top:430px;width:72px;height:1px;background:#c0c0c0;"></div>
<div style="left:428px;top:413px;width:1px;height:18px;background:#c0c0c0;"></div>
<div class="g" style="left:326px;top:414px;font-size:15px;line-height:16px;width:100px;text-align:right">$3,902,267</div>
<div style="left:265px;top:278px;width:143px;height:194px;background:#d4d0c8;"></div>
<div style="left:265px;top:278px;width:142px;height:1px;background:#d4d0c8;"></div>
<div style="left:265px;top:278px;width:1px;height:193px;background:#d4d0c8;"></div>
<div style="left:266px;top:279px;width:140px;height:1px;background:#ffffff;"></div>
<div style="left:266px;top:279px;width:1px;height:191px;background:#ffffff;"></div>
<div style="left:266px;top:470px;width:141px;height:1px;background:#808080;"></div>
<div style="left:406px;top:279px;width:1px;height:192px;background:#808080;"></div>
<div style="left:265px;top:471px;width:143px;height:1px;background:#404040;"></div>
<div style="left:407px;top:278px;width:1px;height:194px;background:#404040;"></div>
<div style="left:288px;top:280px;width:114px;height:19px;background:#0a246a;"></div>
<div style="left:268px;top:280px;width:19px;height:19px;background:#d4d0c8;"></div>
<div style="left:268px;top:280px;width:18px;height:1px;background:#ffffff;"></div>
<div style="left:268px;top:280px;width:1px;height:18px;background:#ffffff;"></div>
<div style="left:268px;top:298px;width:19px;height:1px;background:#808080;"></div>
<div style="left:286px;top:280px;width:1px;height:19px;background:#808080;"></div>
<div class="t" style="left:291px;top:284px;color:#fff;letter-spacing:-0.15px"><u>D</u>rill</div>
<svg style="left:395px;top:287px" width="4" height="7" viewBox="0 0 4 7" shape-rendering="crispEdges"><path d="M0 0h1v1h1v1h1v1h1v1h-1v1h-1v1h-1v1h-1z" fill="#fff"/></svg>
<div class="t" style="left:291px;top:303px;letter-spacing:-0.15px"><u>S</u>ort</div>
<svg style="left:395px;top:306px" width="4" height="7" viewBox="0 0 4 7" shape-rendering="crispEdges"><path d="M0 0h1v1h1v1h1v1h1v1h-1v1h-1v1h-1v1h-1z" fill="#000"/></svg>
<div class="t" style="left:291px;top:322px;letter-spacing:-0.05px"><u>A</u>ttribute Forms</div>
<svg style="left:395px;top:325px" width="4" height="7" viewBox="0 0 4 7" shape-rendering="crispEdges"><path d="M0 0h1v1h1v1h1v1h1v1h-1v1h-1v1h-1v1h-1z" fill="#000"/></svg>
<div class="t" style="left:291px;top:341px;letter-spacing:-0.15px"><u>M</u>ove</div>
<svg style="left:395px;top:344px" width="4" height="7" viewBox="0 0 4 7" shape-rendering="crispEdges"><path d="M0 0h1v1h1v1h1v1h1v1h-1v1h-1v1h-1v1h-1z" fill="#000"/></svg>
<div class="t" style="left:291px;top:360px;letter-spacing:-0.3px">Rem<u>o</u>ve from Grid</div>
<div class="t" style="left:291px;top:385px;letter-spacing:-0.15px"><u>F</u>ormatting</div>
<svg style="left:395px;top:388px" width="4" height="7" viewBox="0 0 4 7" shape-rendering="crispEdges"><path d="M0 0h1v1h1v1h1v1h1v1h-1v1h-1v1h-1v1h-1z" fill="#000"/></svg>
<div class="t" style="left:291px;top:410px;letter-spacing:-0.15px"><u>L</u>ock Object</div>
<div class="t" style="left:291px;top:429px;letter-spacing:-0.15px">Edi<u>t</u>...</div>
<div class="t" style="left:291px;top:454px;letter-spacing:-0.15px">Propert<u>i</u>es</div>
<div class="t" style="left:368px;top:429px;letter-spacing:-0.1px">Ctrl+E</div>
<div style="left:270px;top:377px;width:133px;height:1px;background:#808080;"></div>
<div style="left:270px;top:378px;width:133px;height:1px;background:#ffffff;"></div>
<div style="left:270px;top:402px;width:133px;height:1px;background:#808080;"></div>
<div style="left:270px;top:403px;width:133px;height:1px;background:#ffffff;"></div>
<div style="left:270px;top:446px;width:133px;height:1px;background:#808080;"></div>
<div style="left:270px;top:447px;width:133px;height:1px;background:#ffffff;"></div>
<div style="left:403px;top:278px;width:119px;height:24px;background:#d4d0c8;"></div>
<div style="left:403px;top:278px;width:118px;height:1px;background:#d4d0c8;"></div>
<div style="left:403px;top:278px;width:1px;height:23px;background:#d4d0c8;"></div>
<div style="left:404px;top:279px;width:116px;height:1px;background:#ffffff;"></div>
<div style="left:404px;top:279px;width:1px;height:21px;background:#ffffff;"></div>
<div style="left:404px;top:300px;width:117px;height:1px;background:#808080;"></div>
<div style="left:520px;top:279px;width:1px;height:22px;background:#808080;"></div>
<div style="left:403px;top:301px;width:119px;height:1px;background:#404040;"></div>
<div style="left:521px;top:278px;width:1px;height:24px;background:#404040;"></div>
<div style="left:406px;top:280px;width:18px;height:19px;background:#d4d0c8;"></div>
<div style="left:406px;top:280px;width:17px;height:1px;background:#ffffff;"></div>
<div style="left:406px;top:280px;width:1px;height:18px;background:#ffffff;"></div>
<div style="left:406px;top:298px;width:18px;height:1px;background:#808080;"></div>
<div style="left:423px;top:280px;width:1px;height:19px;background:#808080;"></div>
<div style="left:425px;top:280px;width:95px;height:19px;background:#0a246a;"></div>
<div class="t" style="left:428px;top:284px;color:#fff;letter-spacing:-0.1px">Other directions</div>
<svg style="left:513px;top:287px" width="4" height="7" viewBox="0 0 4 7" shape-rendering="crispEdges"><path d="M0 0h1v1h1v1h1v1h1v1h-1v1h-1v1h-1v1h-1z" fill="#fff"/></svg>
<div style="left:520px;top:278px;width:127px;height:24px;background:#d4d0c8;"></div>
<div style="left:520px;top:278px;width:126px;height:1px;background:#d4d0c8;"></div>
<div style="left:520px;top:278px;width:1px;height:23px;background:#d4d0c8;"></div>
<div style="left:521px;top:279px;width:124px;height:1px;background:#ffffff;"></div>
<div style="left:521px;top:279px;width:1px;height:21px;background:#ffffff;"></div>
<div style="left:521px;top:300px;width:125px;height:1px;background:#808080;"></div>
<div style="left:645px;top:279px;width:1px;height:22px;background:#808080;"></div>
<div style="left:520px;top:301px;width:127px;height:1px;background:#404040;"></div>
<div style="left:646px;top:278px;width:1px;height:24px;background:#404040;"></div>
<div style="left:522px;top:280px;width:20px;height:19px;background:#d4d0c8;"></div>
<div style="left:522px;top:280px;width:19px;height:1px;background:#ffffff;"></div>
<div style="left:522px;top:280px;width:1px;height:18px;background:#ffffff;"></div>
<div style="left:522px;top:298px;width:20px;height:1px;background:#808080;"></div>
<div style="left:541px;top:280px;width:1px;height:19px;background:#808080;"></div>
<div style="left:543px;top:280px;width:102px;height:19px;background:#0a246a;"></div>
<div class="t" style="left:546px;top:284px;color:#fff;letter-spacing:-0.2px">System Hierarchy</div>
<svg style="left:638px;top:287px" width="4" height="7" viewBox="0 0 4 7" shape-rendering="crispEdges"><path d="M0 0h1v1h1v1h1v1h1v1h-1v1h-1v1h-1v1h-1z" fill="#fff"/></svg>
<div style="left:645px;top:278px;width:69px;height:24px;background:#d4d0c8;"></div>
<div style="left:645px;top:278px;width:68px;height:1px;background:#d4d0c8;"></div>
<div style="left:645px;top:278px;width:1px;height:23px;background:#d4d0c8;"></div>
<div style="left:646px;top:279px;width:66px;height:1px;background:#ffffff;"></div>
<div style="left:646px;top:279px;width:1px;height:21px;background:#ffffff;"></div>
<div style="left:646px;top:300px;width:67px;height:1px;background:#808080;"></div>
<div style="left:712px;top:279px;width:1px;height:22px;background:#808080;"></div>
<div style="left:645px;top:301px;width:69px;height:1px;background:#404040;"></div>
<div style="left:713px;top:278px;width:1px;height:24px;background:#404040;"></div>
<svg style="left:649px;top:282px" width="15" height="16" viewBox="0 0 15 16" shape-rendering="crispEdges"><g shape-rendering="geometricPrecision"><path d="M0.5 4.5 L7.5 0.7 L14.5 4.5 L7.5 8.2 Z" fill="#c4c4bc" stroke="#606040" stroke-width="0.9" /><path d="M0.5 4.5 L7.5 8.2 L7.5 15.5 L0.5 11.5 Z" fill="#f4f43c" stroke="#707000" stroke-width="0.9" /><path d="M14.5 4.5 L7.5 8.2 L7.5 15.5 L14.5 11.5 Z" fill="#8c8c14" stroke="#505000" stroke-width="0.9" /></g></svg>
<div class="t" style="left:671px;top:284px;">Year</div>
<svg style="left:271px;top:281px" width="13" height="17" viewBox="0 0 13 17" shape-rendering="crispEdges"><rect x="3" y="9" width="1" height="8" fill="#fff"/><rect x="4" y="10" width="1" height="6" fill="#e8e8e0"/><rect x="1" y="1" width="5" height="9" fill="#f4f430"/><rect x="0" y="2" width="1" height="6" fill="#f4f430"/><rect x="2" y="0" width="4" height="1" fill="#e8e840"/><rect x="2" y="10" width="3" height="1" fill="#e0e040"/><rect x="6" y="1" width="1" height="8" fill="#404010"/><rect x="5" y="2" width="1" height="1" fill="#404010"/><rect x="5" y="4" width="1" height="1" fill="#404010"/><rect x="5" y="6" width="1" height="1" fill="#404010"/><rect x="5" y="8" width="1" height="1" fill="#404010"/><rect x="7" y="1" width="6" height="5" fill="#686810"/><rect x="8" y="2" width="5" height="3" fill="#f0f030"/><rect x="7" y="6" width="3" height="1" fill="#909020"/></svg>
<svg style="left:270px;top:358px" width="14" height="14" viewBox="0 0 14 14" shape-rendering="crispEdges"><rect x="0" y="1" width="1" height="11" fill="#909090"/><rect x="0" y="12" width="1" height="2" fill="#000"/><rect x="1" y="13" width="11" height="1" fill="#909090"/><rect x="3" y="2" width="9" height="11" fill="#fff"/><rect x="3" y="2" width="1" height="11" fill="#a8b0b0"/><rect x="6" y="2" width="1" height="11" fill="#a8b0b0"/><rect x="9" y="2" width="1" height="11" fill="#a8b0b0"/><rect x="3" y="4" width="9" height="1" fill="#a8b0b0"/><rect x="3" y="7" width="9" height="1" fill="#a8b0b0"/><rect x="3" y="10" width="9" height="1" fill="#a8b0b0"/><rect x="12" y="1" width="2" height="13" fill="#000"/><rect x="2" y="0" width="4" height="1" fill="#000"/><rect x="2" y="0" width="1" height="4" fill="#000"/><g shape-rendering="geometricPrecision"><path d="M2.5 0.5 L11.5 9.5" fill="none" stroke="#000" stroke-width="1.3" /></g></svg>
<svg style="left:270px;top:426px" width="16" height="17" viewBox="0 0 16 17" shape-rendering="crispEdges"><rect x="0" y="2" width="10" height="2" fill="#10107c"/><rect x="0" y="4" width="1" height="9" fill="#000"/><rect x="1" y="4" width="9" height="8" fill="#fff"/><rect x="9" y="4" width="1" height="8" fill="#808080"/><rect x="0" y="12" width="10" height="1" fill="#404040"/><rect x="2" y="6" width="5" height="4" fill="#a0a0a0"/><rect x="3" y="7" width="3" height="2" fill="#fff"/><rect x="1" y="2" width="1" height="1" fill="#fff"/><g shape-rendering="geometricPrecision"><path d="M9 3.5 L10.7 0.5 L12.4 3.5 Z" fill="#607030" /><rect x="9" y="3.5" width="3.4" height="11" fill="#d02818"/><rect x="11.2" y="3.5" width="1.2" height="11" fill="#901008"/><path d="M9 14.5 L10.7 16 L12.4 14.5 Z" fill="#901008" /><path d="M4.5 14.5 L15 4.5" fill="none" stroke="#000" stroke-width="2.6" /><path d="M4.8 14.2 L14.7 4.8" fill="none" stroke="#f8f020" stroke-width="1.3" /></g></svg>
<svg style="left:269px;top:452px" width="17" height="14" viewBox="0 0 17 14" shape-rendering="crispEdges"><rect x="0" y="5" width="13" height="9" fill="#000"/><rect x="1" y="6" width="11" height="7" fill="#fff"/><rect x="2" y="8" width="2" height="1" fill="#000"/><rect x="5" y="8" width="6" height="1" fill="#000"/><rect x="2" y="10" width="2" height="1" fill="#000"/><rect x="5" y="10" width="6" height="1" fill="#000"/><g shape-rendering="geometricPrecision"><path d="M1 6 L6.5 1.2 L12 6" fill="#fff" stroke="#000" stroke-width="1" /><path d="M4 5 L7 2.2 M6 6 L9 3.2 M8 6 L10 4.2" fill="none" stroke="#707070" stroke-width="0.8" /></g><rect x="10" y="0" width="7" height="2" fill="#10107c"/><rect x="14" y="0" width="3" height="6" fill="#10107c"/><rect x="12" y="2" width="2" height="2" fill="#10107c"/></svg>
<svg style="left:411px;top:283px" width="12" height="14" viewBox="0 0 12 14" shape-rendering="crispEdges"><rect x="2" y="1" width="9" height="3" fill="#f4f430"/><rect x="1" y="2" width="1" height="2" fill="#f4f430"/><rect x="3" y="0" width="7" height="1" fill="#e8e850"/><rect x="1" y="4" width="10" height="1" fill="#303010"/><rect x="3" y="5" width="8" height="1" fill="#e0e020"/><rect x="5" y="6" width="5" height="1" fill="#202010"/><rect x="6" y="7" width="4" height="5" fill="#f0f020"/><rect x="7" y="8" width="2" height="2" fill="#a0a010"/><rect x="6" y="12" width="4" height="1" fill="#b0b020"/><rect x="0" y="3" width="2" height="1" fill="#fff"/></svg>
<svg style="left:524px;top:281px" width="17" height="16" viewBox="0 0 17 16" shape-rendering="crispEdges"><rect x="5" y="0" width="6" height="6" fill="#10a090"/><rect x="6" y="1" width="1" height="1" fill="#fff"/><rect x="9" y="1" width="2" height="5" fill="#088070"/><rect x="7" y="6" width="2" height="2" fill="#000"/><rect x="5" y="7" width="7" height="1" fill="#000"/><rect x="4" y="8" width="2" height="1" fill="#000"/><rect x="11" y="8" width="2" height="1" fill="#000"/><rect x="3" y="9" width="2" height="3" fill="#000"/><rect x="12" y="9" width="2" height="3" fill="#000"/><rect x="0" y="11" width="5" height="5" fill="#d01818"/><rect x="1" y="12" width="1" height="1" fill="#fff"/><rect x="11" y="11" width="5" height="5" fill="#d01818"/><rect x="12" y="12" width="1" height="1" fill="#fff"/><rect x="3" y="12" width="2" height="4" fill="#a00808"/><rect x="14" y="12" width="2" height="4" fill="#a00808"/></svg>
<div style="left:7px;top:567px;width:401px;height:1px;background:#808080;"></div>
<div style="left:7px;top:567px;width:1px;height:18px;background:#808080;"></div>
<div style="left:7px;top:585px;width:402px;height:1px;background:#ffffff;"></div>
<div style="left:408px;top:567px;width:1px;height:19px;background:#ffffff;"></div>
<div style="left:411px;top:567px;width:137px;height:1px;background:#808080;"></div>
<div style="left:411px;top:567px;width:1px;height:18px;background:#808080;"></div>
<div style="left:411px;top:585px;width:138px;height:1px;background:#ffffff;"></div>
<div style="left:548px;top:567px;width:1px;height:19px;background:#ffffff;"></div>
<div style="left:551px;top:567px;width:52px;height:1px;background:#808080;"></div>
<div style="left:551px;top:567px;width:1px;height:18px;background:#808080;"></div>
<div style="left:551px;top:585px;width:53px;height:1px;background:#ffffff;"></div>
<div style="left:603px;top:567px;width:1px;height:19px;background:#ffffff;"></div>
<div style="left:606px;top:567px;width:65px;height:1px;background:#808080;"></div>
<div style="left:606px;top:567px;width:1px;height:18px;background:#808080;"></div>
<div style="left:606px;top:585px;width:66px;height:1px;background:#ffffff;"></div>
<div style="left:671px;top:567px;width:1px;height:19px;background:#ffffff;"></div>
<div style="left:675px;top:567px;width:98px;height:1px;background:#808080;"></div>
<div style="left:675px;top:567px;width:1px;height:18px;background:#808080;"></div>
<div style="left:675px;top:585px;width:99px;height:1px;background:#ffffff;"></div>
<div style="left:773px;top:567px;width:1px;height:19px;background:#ffffff;"></div>
<div style="left:778px;top:567px;width:38px;height:1px;background:#808080;"></div>
<div style="left:778px;top:567px;width:1px;height:18px;background:#808080;"></div>
<div style="left:778px;top:585px;width:39px;height:1px;background:#ffffff;"></div>
<div style="left:816px;top:567px;width:1px;height:19px;background:#ffffff;"></div>
<div class="t" style="left:10.5px;top:571px;letter-spacing:-0.2px">Execution complete</div>
<div class="t" style="left:415.5px;top:571px;letter-spacing:-0.07px">Execution Time: 00:00:01</div>
<div class="t" style="left:554.5px;top:571px;letter-spacing:-0.1px">Rows: 8</div>
<div class="t" style="left:610px;top:571px;letter-spacing:-0.3px">Columns: 1</div>
<div class="t" style="left:694px;top:571px;letter-spacing:-0.2px">Local Template</div>
<div class="t" style="left:782px;top:571px;letter-spacing:-0.6px">OLAP</div>
<svg style="left:677px;top:569px" width="14" height="15" viewBox="0 0 14 15" shape-rendering="crispEdges"><rect x="0" y="0" width="14" height="15" fill="#000"/><rect x="1" y="1" width="12" height="2" fill="#0a1a7c"/><rect x="1" y="1" width="1" height="1" fill="#fff"/><rect x="1" y="3" width="12" height="11" fill="#fff"/><rect x="2" y="4" width="4" height="4" fill="#c0c8c8"/><rect x="8" y="5" width="5" height="2" fill="#c03020"/><rect x="2" y="10" width="3" height="2" fill="#10207c"/><rect x="8" y="10" width="5" height="3" fill="#40c040"/><rect x="6" y="4" width="1" height="5" fill="#c0c0e0"/><rect x="2" y="8" width="5" height="1" fill="#c0c0e0"/></svg>
<svg style="left:822px;top:573px" width="12" height="12" viewBox="0 0 12 12" shape-rendering="crispEdges"><path d="M11 0L0 11M11 4L4 11M11 8L8 11" stroke="#808080" stroke-width="1.4" fill="none" shape-rendering="auto"/><path d="M12 0L1 11M12 4L5 11M12 8L9 11" stroke="#fff" stroke-width="1" fill="none" shape-rendering="auto"/></svg>
</div></body></html>
